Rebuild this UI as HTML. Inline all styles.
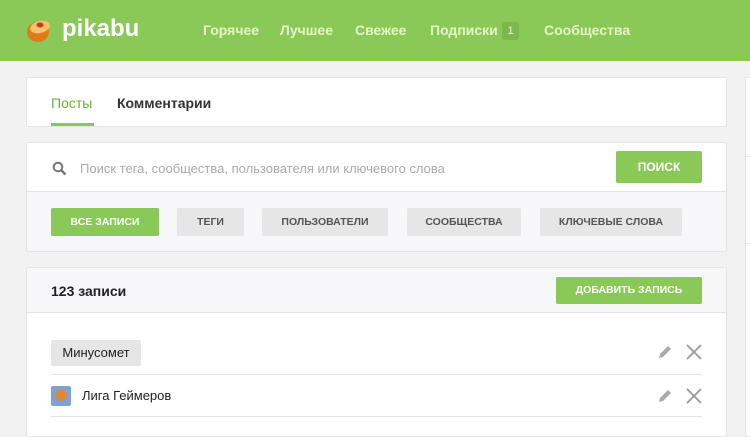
<!DOCTYPE html>
<html><head><meta charset="utf-8"><style>
*{box-sizing:border-box;margin:0;padding:0}
body{width:750px;height:419px;overflow:hidden;background:#f2f2f2;font-family:"Liberation Sans",sans-serif;position:relative}
.hdr{position:absolute;left:0;top:0;width:750px;height:61px;background:#8ac858}
.abs{position:absolute}
.nav{position:absolute;top:22px;color:#e4f6c6;font-size:14px;font-weight:bold}
.card{position:absolute;background:#fff;border:1px solid #e4e4e4;border-radius:2px}
.btn{position:absolute;height:28px;line-height:28px;text-align:center;font-size:10.5px;font-weight:bold;border-radius:2px;color:#555;background:#e6e6e6}
.g{background:#8ac858;color:#fff}
</style></head><body>
<div class="hdr">
 <svg class="abs" style="left:24px;top:16px" width="28" height="28" viewBox="0 0 28 28">
  <ellipse cx="14" cy="16" rx="11" ry="10" fill="#e07a1e"/>
  <ellipse cx="16" cy="11" rx="10" ry="6" fill="#f6c16c" transform="rotate(-15 16 11)"/>
  <ellipse cx="16" cy="9" rx="3.5" ry="2.5" fill="#c33b1a"/>
 </svg>
 <div class="abs" style="left:62px;top:15px;color:#fff;font-size:24px;font-weight:bold">pikabu</div>
 <div class="nav" style="left:203px">Горячее</div>
 <div class="nav" style="left:280px">Лучшее</div>
 <div class="nav" style="left:355px">Свежее</div>
 <div class="nav" style="left:430px">Подписки</div>
 <div class="abs" style="left:502px;top:22px;width:17px;height:18px;background:#7db84c;border-radius:3px;color:#e4f6c6;font-size:11px;text-align:center;line-height:18px">1</div>
 <div class="nav" style="left:544px">Сообщества</div>
</div>

<div class="card" style="left:26px;top:77px;width:701px;height:50px">
 <div class="abs" style="left:24px;top:17px;color:#6faf3c;font-size:14px">Посты</div>
 <div class="abs" style="left:24px;top:45px;width:43px;height:3px;background:#8ac858"></div>
 <div class="abs" style="left:90px;top:17px;color:#333;font-size:14px;font-weight:bold">Комментарии</div>
</div>

<div class="card" style="left:26px;top:142px;width:701px;height:110px;background:#f7f7f9">
 <div class="abs" style="left:0;top:0;width:699px;height:49px;background:#fff;border-bottom:1px solid #e4e4e4"></div>
 <svg class="abs" style="left:25px;top:18px" width="15" height="15" viewBox="0 0 15 15"><circle cx="6" cy="6" r="4.3" fill="none" stroke="#777" stroke-width="2"/><path d="M9 9l4.5 4.5" stroke="#777" stroke-width="2.4"/></svg>
 <div class="abs" style="left:53px;top:18px;color:#aaa;font-size:13px">Поиск тега, сообщества, пользователя или ключевого слова</div>
 <div class="btn g" style="left:589px;top:8px;width:86px;height:32px;line-height:32px;font-size:12px">ПОИСК</div>
 <div class="btn g" style="left:24px;top:65px;width:108px">ВСЕ ЗАПИСИ</div>
 <div class="btn" style="left:150px;top:65px;width:67px">ТЕГИ</div>
 <div class="btn" style="left:235px;top:65px;width:126px">ПОЛЬЗОВАТЕЛИ</div>
 <div class="btn" style="left:380px;top:65px;width:114px">СООБЩЕСТВА</div>
 <div class="btn" style="left:513px;top:65px;width:142px">КЛЮЧЕВЫЕ СЛОВА</div>
</div>

<div class="card" style="left:26px;top:267px;width:701px;height:170px">
 <div class="abs" style="left:0;top:0;width:699px;height:45px;background:#f7f7f9;border-bottom:1px solid #e4e4e4"></div>
 <div class="abs" style="left:24px;top:15px;color:#222;font-size:14px;font-weight:bold">123 записи</div>
 <div class="btn g" style="left:529px;top:9px;width:146px;height:27px;line-height:27px">ДОБАВИТЬ ЗАПИСЬ</div>
 <div class="abs" style="left:24px;top:72px;width:90px;height:26px;background:#e6e6e6;border-radius:2px;color:#222;font-size:13px;line-height:26px;text-align:center">Минусомет</div>
 <div class="abs" style="left:24px;top:106px;width:651px;height:1px;background:#e4e4e4"></div>
 <div class="abs" style="left:24px;top:118px;width:20px;height:20px;background:#7aa4d8;border-radius:2px"><div style="margin:3px 4px;width:12px;height:12px;border-radius:50%;background:#d88a3a"></div></div>
 <div class="abs" style="left:55px;top:120px;color:#222;font-size:13px">Лига Геймеров</div>
 <div class="abs" style="left:24px;top:148px;width:651px;height:1px;background:#e4e4e4"></div>
 <svg class="abs" style="left:630px;top:76px" width="16" height="16" viewBox="0 0 16 16"><path d="M2 14l1-4 8-8 3 3-8 8z" fill="#aaa"/></svg>
 <svg class="abs" style="left:658px;top:75px" width="18" height="18" viewBox="0 0 18 18"><path d="M2 2l14 14M16 2L2 16" stroke="#999" stroke-width="1.8"/></svg>
 <svg class="abs" style="left:630px;top:120px" width="16" height="16" viewBox="0 0 16 16"><path d="M2 14l1-4 8-8 3 3-8 8z" fill="#aaa"/></svg>
 <svg class="abs" style="left:658px;top:119px" width="18" height="18" viewBox="0 0 18 18"><path d="M2 2l14 14M16 2L2 16" stroke="#999" stroke-width="1.8"/></svg>
</div>

<div class="card" style="left:745px;top:77px;width:20px;height:360px">
 <div class="abs" style="left:0;top:78px;width:20px;height:1px;background:#e4e4e4"></div>
 <div class="abs" style="left:0;top:165px;width:20px;height:1px;background:#e4e4e4"></div>
</div>
</body></html>
